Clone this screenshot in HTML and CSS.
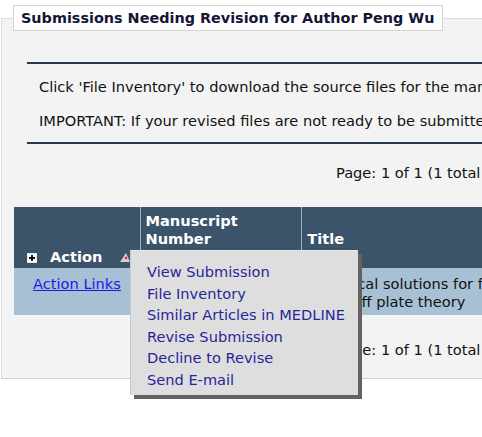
FILE: index.html
```html
<!DOCTYPE html>
<html>
<head>
<meta charset="utf-8">
<link rel="stylesheet" href="styles.css">
</head>
<body>
<fieldset class="panel">
  <legend class="panel-title">Submissions Needing Revision for Author Peng Wu</legend>
  <div class="notice">
    <p>Click 'File Inventory' to download the source files for the manuscript. You may then edit these files and submit them as part of your revision.</p>
    <p>IMPORTANT: If your revised files are not ready to be submitted, you may still view the reviewer comments.</p>
  </div>
  <div class="pager">Page: 1 of 1 (1 total revisions)</div>
  <table class="grid">
    <thead>
      <tr>
        <th class="col-action"><span class="plus"><svg width="10" height="10" viewBox="0 0 10 10"><rect x="0.5" y="0.5" width="9" height="9" fill="#fff" stroke="#e8e8e8"/><path d="M2 5h6M5 2v6" stroke="#111" stroke-width="2"/></svg></span>Action<span class="sort-tri"><svg width="10" height="10" viewBox="0 0 10 10"><path d="M0 10L6 1L10 10Z" fill="#e3c9c4"/><circle cx="6" cy="6" r="1.3" fill="#d0303a"/></svg></span></th>
        <th class="col-num">Manuscript<br>Number<div class="sorts"><span class="dot"></span><span class="dot"></span></div></th>
        <th class="col-title">Title<div class="sorts"><span class="dot"></span><span class="dot"></span></div></th>
      </tr>
    </thead>
    <tbody>
      <tr>
        <td class="col-action"><a class="link" href="#">Action Links</a></td>
        <td class="col-num">PENG-D-24-00123R1</td>
        <td class="col-title">Analytical solutions for free vibration of rectangular plates based on<br>Kirchhoff plate theory</td>
      </tr>
    </tbody>
  </table>
  <div class="pager pager-bottom">Page: 1 of 1 (1 total revisions)</div>
</fieldset>
<div class="menu">
  <a href="#">View Submission</a>
  <a href="#">File Inventory</a>
  <a href="#">Similar Articles in MEDLINE</a>
  <a href="#">Revise Submission</a>
  <a href="#">Decline to Revise</a>
  <a href="#">Send E-mail</a>
</div>
</body>
</html>
```
FILE: styles.css
```css
html, body {
  margin: 0;
  padding: 0;
  overflow: hidden;
  background: #ffffff;
}
body {
  font-family: "DejaVu Sans", Verdana, sans-serif;
  font-size: 14.6px;
  color: #111;
  width: 482px;
  height: 437px;
  position: relative;
}
.panel {
  margin: 5px 0 0 1px;
  padding: 0;
  width: 1100px;
  height: 374px;
  box-sizing: border-box;
  border: 1px solid #dcdcdc;
  border-bottom-color: #cfcfcf;
  background: #f3f3f3;
  min-width: 0;
}
.panel-title {
  margin-left: 11px;
  padding: 4px 7px 4px 7px;
  background: #fff;
  border: 1px solid #d4d4d4;
  font-weight: bold;
  font-size: 14.4px;
  line-height: 16px;
  color: #151538;
}
.notice {
  margin: 31px 0 0 25px;
  border-top: 2px solid #2a3b4e;
  border-bottom: 2px solid #2a3b4e;
  padding: 14px 0 12px 12px;
  white-space: nowrap;
}
.notice p {
  margin: 0;
  line-height: 18px;
}
.notice p + p {
  margin-top: 16px;
}
.pager {
  padding: 20px 0 0 334px;
  line-height: 18px;
  white-space: nowrap;
}
.grid {
  margin: 25px 0 0 12px;
  border-collapse: collapse;
  width: 1000px;
}
.grid th {
  background: #3c5469;
  color: #fff;
  font-weight: bold;
  text-align: left;
  vertical-align: bottom;
  line-height: 18px;
  height: 61px;
  padding: 0 5px;
  box-sizing: border-box;
  border-left: 1px solid #9fb2c2;
}
.grid th:first-child {
  border-left: 0;
}
.grid th.col-action {
  width: 126px;
  padding: 0 0 2px 13px;
  position: relative;
}
.grid th.col-num {
  width: 161px;
}
.plus {
  display: inline-block;
  vertical-align: -1px;
  margin-right: 13px;
  line-height: 0;
}
.sort-tri {
  display: inline-block;
  margin-left: 18px;
  vertical-align: 0;
  line-height: 0;
}
.sorts {
  display: flex;
  gap: 4px;
  height: 20px;
  align-items: flex-start;
  padding-top: 3px;
  box-sizing: border-box;
}
.dot {
  display: inline-block;
  width: 11px;
  height: 6px;
  border-radius: 6px 6px 0 0;
  background: #c7d3dd;
}
.grid td {
  background: #a8c0d4;
  vertical-align: top;
  line-height: 18px;
  padding: 7px 5px 4px 5px;
  white-space: nowrap;
}
.grid td.col-action {
  text-align: center;
}
.link {
  color: #1a1ae6;
  text-decoration: underline;
}
.pager-bottom {
  padding-top: 26px;
}
.menu {
  position: absolute;
  left: 130px;
  top: 250px;
  width: 211px;
  padding: 10px 0 5px 16px;
  background: #dedede;
  border-top: 1px solid #e8e8e8;
  border-left: 1px solid #c8c8c8;
  box-shadow: 4px 4px 0 #626262;
  display: flex;
  flex-direction: column;
}
.menu a {
  color: #26269a;
  text-decoration: none;
  font-size: 14.6px;
  line-height: 21.5px;
  white-space: nowrap;
}
```
